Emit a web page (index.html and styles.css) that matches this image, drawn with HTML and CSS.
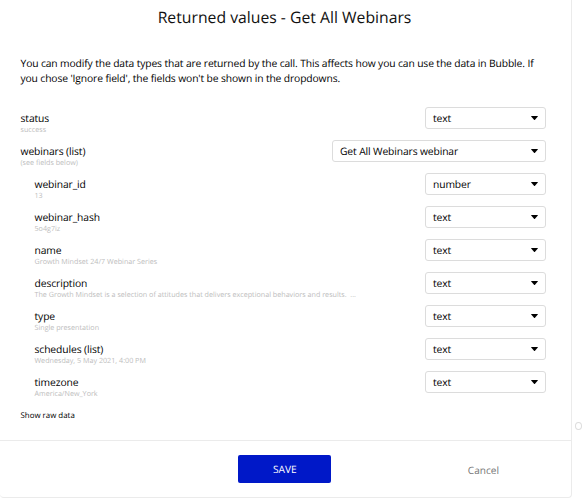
FILE: index.html
```html
<!DOCTYPE html>
<html lang="en">
<head>
    <meta charset="UTF-8">
    <meta name="viewport" content="width=device-width, initial-scale=1.0">
    <title>Returned values - Get All Webinars</title>
    <link rel="stylesheet" href="styles.css">
</head>
<body>
    <div class="backdrop-circle"></div>
    <div class="popup">
        <div class="content">
            <h1>Returned values - Get All Webinars</h1>
            <p class="intro"><span>You can modify the data types that are returned by the call. This affects how you can use the data in Bubble. If</span> <span>you chose 'Ignore field', the fields won't be shown in the dropdowns.</span></p>
            <div class="fields" id="fields">
                <!-- Fields will be rendered here -->
            </div>
            <a class="raw-data"><span>Show raw data</span></a>
        </div>
        <div class="footer">
            <button class="save-btn"><span>SAVE</span></button>
            <button class="cancel-btn"><span>Cancel</span></button>
        </div>
    </div>
    <script src="script.js"></script>
</body>
</html>
```

FILE: script.js
```js
const fields = [
    { name: 'status', sample: 'success', type: 'text' },
    { name: 'webinars (list)', sample: '(see fields below)', type: 'Get All Webinars webinar', wide: true },
    { name: 'webinar_id', sample: '13', type: 'number', nested: true },
    { name: 'webinar_hash', sample: '5o4g7iz', type: 'text', nested: true },
    { name: 'name', sample: 'Growth Mindset 24/7 Webinar Series', type: 'text', nested: true },
    { name: 'description', sample: 'The Growth Mindset is a selection of attitudes that delivers exceptional behaviors and results.\u00a0 ...', type: 'text', nested: true },
    { name: 'type', sample: 'Single presentation', type: 'text', nested: true },
    { name: 'schedules (list)', sample: 'Wednesday, 5 May 2021, 4:00 PM', type: 'text', nested: true },
    { name: 'timezone', sample: 'America/New_York', type: 'text', nested: true }
];

function addSpan(parent, className, text) {
    const span = document.createElement('span');
    span.className = className;
    span.textContent = text;
    parent.appendChild(span);
}

const list = document.getElementById('fields');
fields.forEach(field => {
    const row = document.createElement('div');
    row.className = field.nested ? 'field nested' : 'field';

    const label = document.createElement('div');
    label.className = 'label';
    addSpan(label, 'name', field.name);
    addSpan(label, 'sample', field.sample);
    row.appendChild(label);

    const dropdown = document.createElement('div');
    dropdown.className = field.wide ? 'dropdown wide' : 'dropdown';
    addSpan(dropdown, 'value', field.type);
    // Caret
    dropdown.insertAdjacentHTML('beforeend',
        '<svg class="caret" width="7" height="4" viewBox="0 0 7 4"><path d="M0.4 0H6.6Q7 0 6.8 0.5L4 3.7Q3.5 4.2 3 3.7L0.2 0.5Q0 0 0.4 0Z"/></svg>');
    row.appendChild(dropdown);

    list.appendChild(row);
});
```

FILE: styles.css
```css
* {
    box-sizing: border-box;
}
body {
    font-family: 'Open Sans', 'Noto Sans', sans-serif;
    text-rendering: geometricPrecision;
    background: #fff;
    color: #111;
    margin: 0;
    height: 500px;
    overflow: hidden;
}
.popup {
    width: 572px;
    height: 498px;
    background: #fff;
    border-right: 1px solid #ebebeb;
    border-bottom: 1px solid #ebebeb;
    border-radius: 0 0 4px 4px;
}
.content {
    height: 441px;
    padding: 6px 25px 0 20px;
    border-bottom: 1px solid #ebebeb;
}
h1 {
    margin: 0 0 29px 3px;
    font-size: 15.75px;
    font-weight: 400;
    line-height: 22px;
    text-align: center;
}
.intro {
    margin: 0 0 20px;
    padding-left: 0.5px;
    font-size: 10.3px;
    letter-spacing: -0.12px;
    line-height: 15px;
    color: #000;
}
.intro span {
    display: block;
    white-space: nowrap;
}
.field {
    display: flex;
    justify-content: space-between;
    align-items: flex-start;
    height: 33px;
}
.nested {
    padding-left: 14px;
}
.label {
    display: flex;
    flex-direction: column;
    padding: 6px 0 0 0.5px;
    white-space: nowrap;
}
.name {
    font-size: 10.3px;
    letter-spacing: -0.1px;
    line-height: 12px;
    color: #000;
}
.sample {
    font-size: 7.18px;
    line-height: 11px;
    color: #bdbdbd;
}
.dropdown {
    display: flex;
    justify-content: space-between;
    align-items: center;
    width: 121px;
    height: 22px;
    padding: 0 7px;
    border: 1px solid #dcdcdc;
    border-radius: 3px;
    font-size: 10.3px;
    letter-spacing: -0.12px;
    line-height: 18px;
    color: #000;
}
.value {
    padding-top: 2px;
}
.wide {
    width: 214px;
}
.caret {
    display: block;
    fill: #000;
}
.raw-data {
    display: block;
    margin-top: 7px;
    padding-left: 0.5px;
    font-size: 7.9px;
    line-height: 11px;
    color: #000;
}
.footer {
    display: flex;
    justify-content: flex-end;
    align-items: flex-start;
    padding: 14px 72px 0 0;
}
button {
    border: none;
    background: none;
    padding: 0;
    font-family: inherit;
    text-rendering: inherit;
    cursor: pointer;
}
.save-btn {
    width: 93px;
    height: 28px;
    margin-right: 136.5px;
    background: #0018c8;
    color: #fff;
    border-radius: 2px;
    font-size: 10.2px;
    letter-spacing: -0.1px;
}
.cancel-btn {
    height: 30px;
    font-size: 10.1px;
    color: #777;
}
/* Page element still visible behind the popup */
.backdrop-circle {
    position: absolute;
    left: 575px;
    top: 422px;
    width: 7px;
    height: 8px;
    border: 1px solid #ddd;
    border-radius: 50%;
}
```
